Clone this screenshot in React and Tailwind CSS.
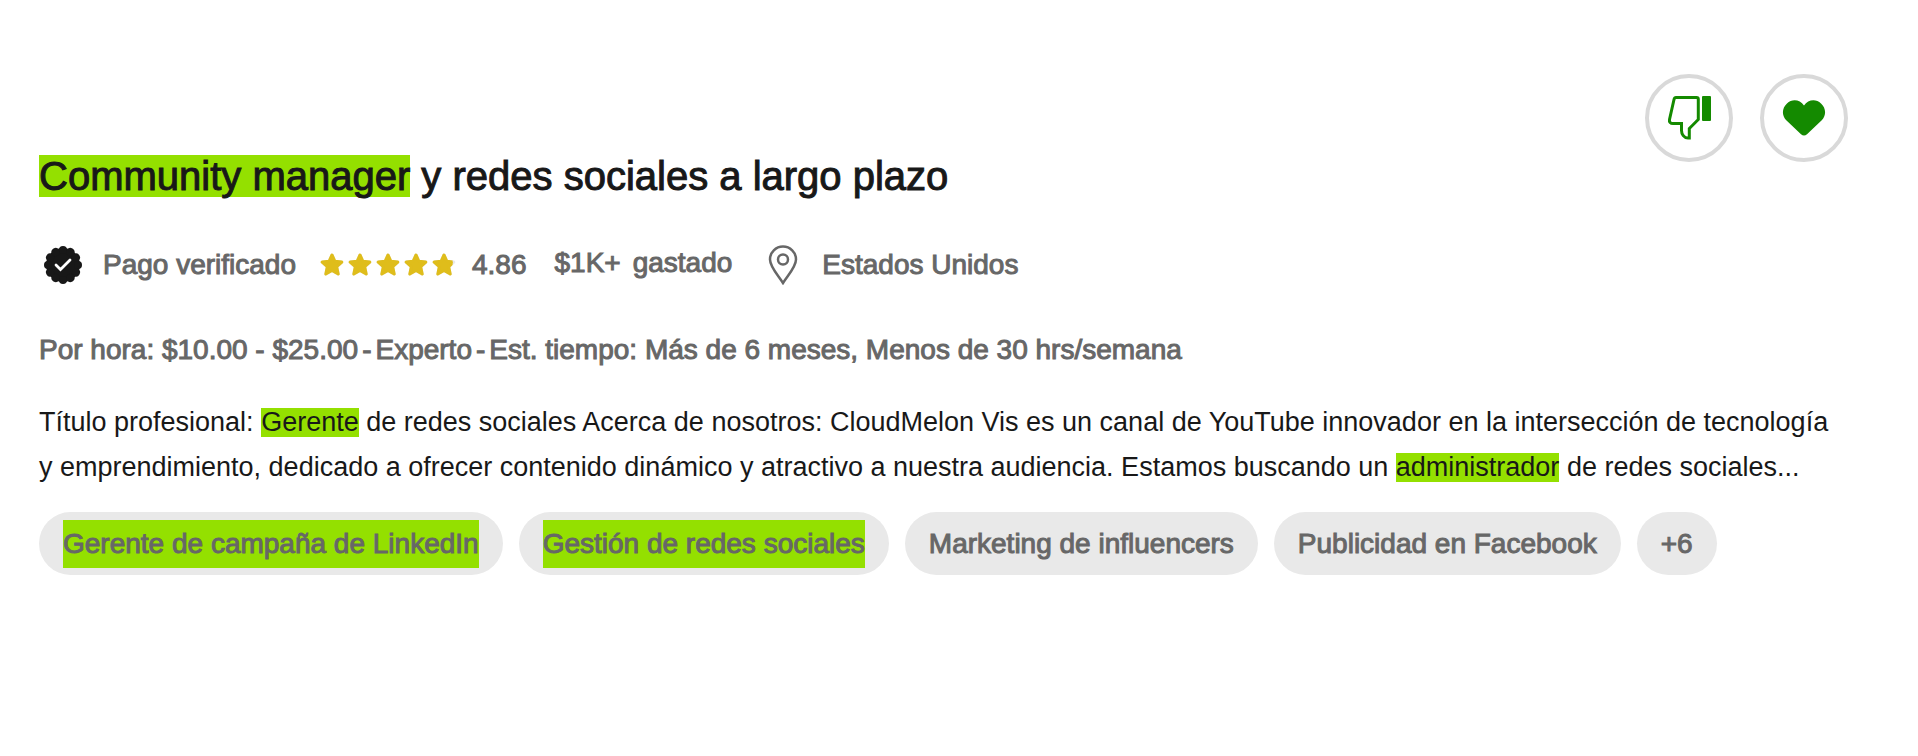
import React from 'react';

const STAR = 'M12 2l2.900 6.300 6.900.8-5.100 4.600 1.500 7.300L12 17.500 5.800 21l1.500-7.300-5.100-4.600 6.900-.8z';

function Mark({ children, className = '' }) {
    return <mark className={`inline-block bg-[#94e000] text-inherit ${className}`}>{children}</mark>;
}

function Star({ fill = 1 }) {
    return (
        <svg width="24" height="24" viewBox="0 0 24 24" strokeWidth="3" strokeLinejoin="round">
            <path d={STAR} fill="#e9e9e9" stroke="#e9e9e9" />
            <svg width={24 * fill} height="24">
                <path d={STAR} fill="#dfbd1b" stroke="#dfbd1b" />
            </svg>
        </svg>
    );
}

function App() {
    const skills = [
        { label: 'Gerente de campaña de LinkedIn', match: true },
        { label: 'Gestión de redes sociales', match: true },
        { label: 'Marketing de influencers', match: false },
        { label: 'Publicidad en Facebook', match: false },
        { label: '+6', match: false },
    ];

    return (
        <article className="min-h-screen bg-white px-[39px] pt-[74px] text-[#181818] font-['Liberation_Sans',sans-serif]">
            <div className="mr-[31px] flex h-[75px] justify-end gap-[27px]">
                <button aria-label="No me interesa" className="flex size-[88px] items-center justify-center rounded-full border-4 border-[#d9d9d9]">
                    <svg width="44" height="44" viewBox="0 0 44 44" className="text-[#148a00]">
                        <path d="M9 1.500h20.500q1.800 0 1.800 1.800v20.200L22.300 32.500v9.500h-1.300c-4 0-6.500-4-6.500-7.500V27.500H6c-2.500 0-4-1.500-3.500-4L7 3.500q.5-2 2-2z" fill="none" stroke="currentColor" strokeWidth="3" />
                        <rect x="35" y="0" width="9" height="25" rx="1" fill="currentColor" />
                    </svg>
                </button>
                <button aria-label="Guardar empleo" className="flex size-[88px] items-center justify-center rounded-full border-4 border-[#d9d9d9]">
                    <svg width="44" height="36" viewBox="0 0 44 36" className="text-[#148a00]">
                        <path d="M22 5.500C26-.5 34-1.500 39 3.500c5 4.500 5.500 11.500 1 16.500L25 34.200q-3 2.600-6 0L4 20C-.5 15 0 8 5 3.500 10-1.500 18-.5 22 5.500z" fill="currentColor" />
                    </svg>
                </button>
            </div>

            <h2 className="text-[40px] leading-[54px] [-webkit-text-stroke:1px]">
                <Mark className="leading-[42px]">Community manager</Mark> y redes sociales a largo plazo
            </h2>

            <div className="mt-[42px] flex h-[40px] items-center text-[28px] text-[#676767] [-webkit-text-stroke:1px]">
                <svg width="40" height="40" viewBox="0 0 40 40" className="ml-1 text-[#181818]">
                    <circle cx="20" cy="20" r="17" fill="currentColor" />
                    {[0, 30, 60, 90, 120, 150, 180, 210, 240, 270, 300, 330].map((angle) => (
                        <circle key={angle} cx="20" cy="5" r="4" fill="currentColor" transform={`rotate(${angle} 20 20)`} />
                    ))}
                    <path d="M13 20l4.500 4.500 9.500-9.500" fill="none" stroke="#fff" strokeWidth="2.800" strokeLinecap="round" />
                </svg>
                <span className="ml-5">Pago verificado</span>
                <div className="ml-6 flex gap-1" role="img" aria-label="4.86 de 5 estrellas">
                    <Star />
                    <Star />
                    <Star />
                    <Star />
                    <Star fill={0.86} />
                </div>
                <span className="ml-4">4.86</span>
                <div className="ml-7 flex gap-3 pb-1">
                    <span>$1K+</span>
                    <span>gastado</span>
                </div>
                <svg width="30" height="40" viewBox="0 0 30 40" className="ml-9">
                    <path d="M15 38C10 30 2 22 2 14.500a13 13 0 0 1 26 0C28 22 20 30 15 38z" fill="none" stroke="currentColor" strokeWidth="2.500" />
                    <circle cx="15" cy="14.500" r="5" fill="none" stroke="currentColor" strokeWidth="2.500" />
                </svg>
                <span className="ml-6">Estados Unidos</span>
            </div>

            <p className="mt-[42px] text-[28px] leading-[45px] text-[#676767] [-webkit-text-stroke:1px]">
                Por hora: $10.00 - $25.00<span className="mx-1">-</span>Experto<span className="mx-1">-</span>Est. tiempo: Más de 6 meses, Menos de 30 hrs/semana
            </p>

            <p className="mt-[28px] text-[27px] leading-[45px]">
                Título profesional: <Mark className="leading-[29px]">Gerente</Mark> de redes sociales Acerca de nosotros: CloudMelon Vis es un canal de YouTube innovador en la intersección de tecnología{' '}
                <br className="hidden 2xl:block" />
                y emprendimiento, dedicado a ofrecer contenido dinámico y atractivo a nuestra audiencia. Estamos buscando un <Mark className="leading-[29px]">administrador</Mark> de redes sociales...
            </p>

            <ul className="mt-[22px] flex flex-wrap gap-4">
                {skills.map((skill) => (
                    <li key={skill.label} className="flex h-[63px] items-center rounded-[32px] bg-[#e9e9e9] px-6 text-[28px] leading-[48px] text-[#676767] [-webkit-text-stroke:1px]">
                        {skill.match ? <Mark>{skill.label}</Mark> : skill.label}
                    </li>
                ))}
            </ul>
        </article>
    );
}

export default App;
